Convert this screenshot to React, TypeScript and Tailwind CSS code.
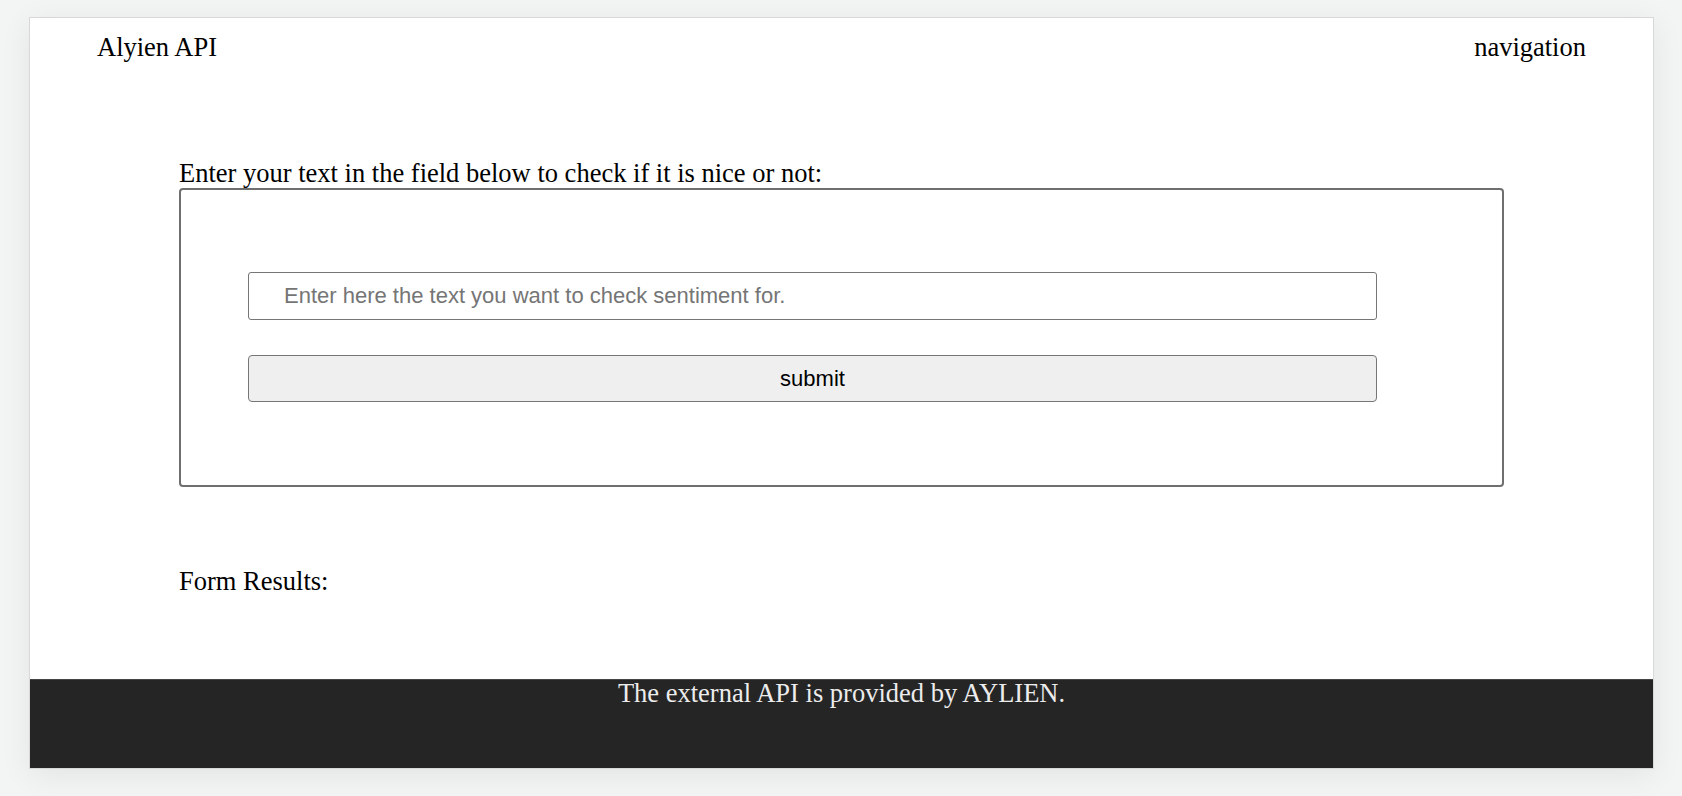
import React from "react";

export default function App() {
  return (
    <div className="w-full h-[796px] bg-[#f3f4f4] pt-[17px] pl-[29px] pr-[28px] overflow-hidden">
      <div className="h-[752px] bg-white border border-[#d8d8d8] flex flex-col shadow-[0_6px_30px_rgba(0,0,0,0.07)] font-['Liberation_Serif',serif] text-black">
        <header className="flex justify-between px-[67px] pt-[14px] text-[26.5px] leading-[30px]">
          <span>Alyien API</span>
          <span>navigation</span>
        </header>
        <main className="px-[149px]">
          <p className="mt-[96px] text-[26.5px] leading-[30px]">
            Enter your text in the field below to check if it is nice or not:
          </p>
          <form
            className="h-[299px] border-2 border-[#6f6f6f] rounded-[4px] pt-[82px] pl-[67px] flex flex-col"
            onSubmit={(e) => e.preventDefault()}
          >
            <input
              type="text"
              placeholder="Enter here the text you want to check sentiment for."
              className="w-[1129px] h-[48px] border border-[#767676] rounded-[3px] pl-[35px] text-[22px] font-['Liberation_Sans',Arial,sans-serif] placeholder:text-[#757575] outline-none bg-white"
            />
            <button
              type="submit"
              className="mt-[35px] w-[1129px] h-[47px] bg-[#efefef] border border-[#767676] rounded-[4px] text-[22px] font-['Liberation_Sans',Arial,sans-serif] text-black"
            >
              submit
            </button>
          </form>
          <p className="mt-[79px] text-[26.5px] leading-[30px]">Form Results:</p>
        </main>
        <footer className="mt-auto h-[89px] bg-[#252525] border-t border-[#454545] text-center text-[#ececec] text-[26.5px] leading-[26px]">
          The external API is provided by AYLIEN.
        </footer>
      </div>
    </div>
  );
}
